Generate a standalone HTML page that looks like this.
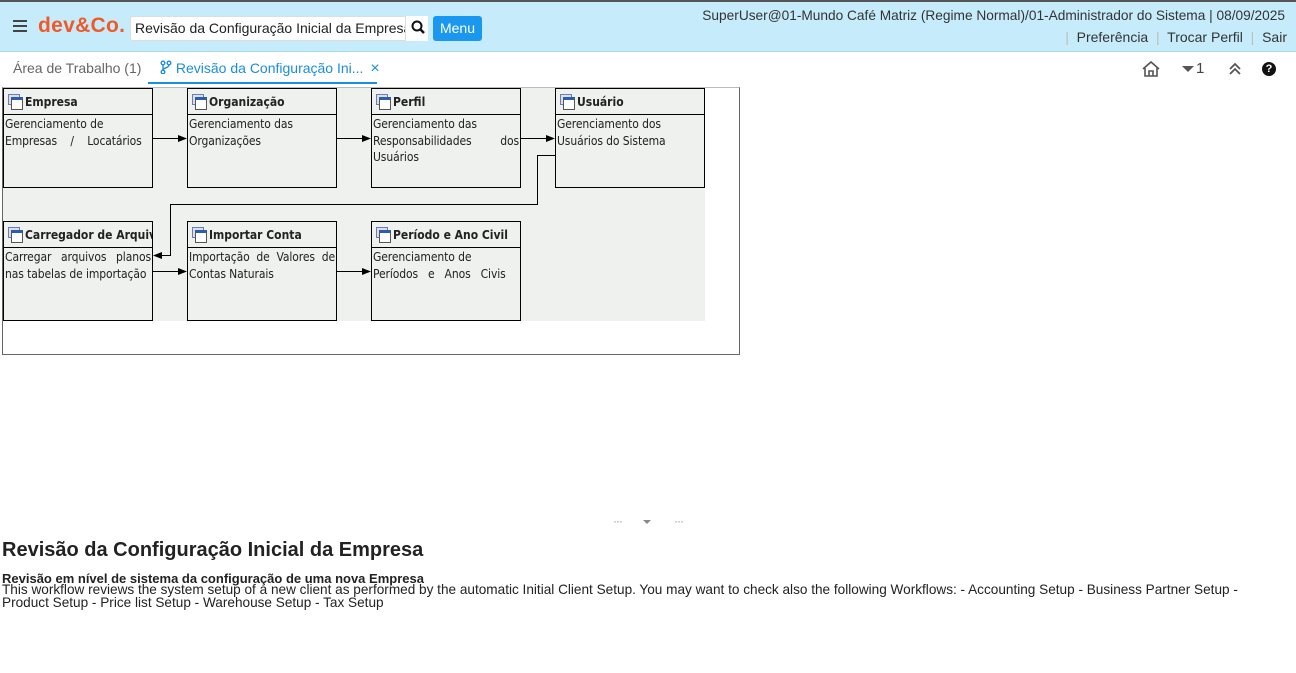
<!DOCTYPE html>
<html><head><meta charset="utf-8"><style>
*{box-sizing:border-box;margin:0;padding:0}
body{width:1296px;height:673px;background:#fff;font-family:"Liberation Sans","DejaVu Sans",sans-serif;position:relative;overflow:hidden;color:#222}
.hdr{position:absolute;left:0;top:0;width:1296px;height:52px;background:#c6ecfb;border-top:2px solid #555;border-bottom:1px solid #a8d8ea}
.abs{position:absolute}
.box{position:absolute;width:150px;height:100px;border:1px solid #000;background:#eef1ed;font-family:"DejaVu Sans Condensed","DejaVu Sans",sans-serif;font-stretch:condensed;font-size:12px}
.box .t{height:26px;border-bottom:1px solid #000;padding:1px 0 0 4px;font-weight:bold;white-space:nowrap;overflow:hidden;display:flex;align-items:center;gap:2px;font-size:12px}
.box .d{padding:1px 1px;line-height:16.5px;text-align:justify;letter-spacing:-0.1px}
.ic{display:inline-block;width:15px;height:14px;position:relative;margin-top:-2px;flex:none}
.ic:before{content:"";position:absolute;left:0;top:0;width:10px;height:9px;border:1px solid #6b7fa8;background:#dde}
.ic:after{content:"";position:absolute;left:3px;top:3px;width:10px;height:9px;border:1px solid #555;background:#fff;border-top:3px solid #2a5fb0}
</style></head><body>
<div class="hdr">
 <div class="abs" style="left:13px;top:18px;width:14px;height:2px;background:#444;box-shadow:0 5px 0 #444,0 10px 0 #444"></div>
 <div class="abs" style="left:38px;top:12px;font-size:21px;font-weight:bold;color:#f05a28;letter-spacing:0.3px">dev&amp;Co.</div>
 <div class="abs" style="left:130px;top:14px;width:298px;height:25px;background:#fff;border:1px solid #ddd;border-radius:3px;font-size:14px;padding:3px 0 0 4px;white-space:nowrap;overflow:hidden">Revisão da Configuração Inicial da Empresa</div>
 <div class="abs" style="left:405px;top:14px;width:23px;height:25px;border-left:1px solid #ddd;background:#fff">
  <svg width="23" height="25"><circle cx="11" cy="10" r="4.5" fill="none" stroke="#111" stroke-width="2"/><line x1="14" y1="13" x2="18" y2="17" stroke="#111" stroke-width="2.5"/></svg></div>
 <div class="abs" style="left:433px;top:14px;width:49px;height:25px;background:#1a98f0;border-radius:3px;color:#fff;font-size:14px;text-align:center;line-height:25px">Menu</div>
 <div class="abs" style="right:11px;top:6px;font-size:13.7px;color:#333;white-space:nowrap">SuperUser@01-Mundo Café Matriz (Regime Normal)/01-Administrador do Sistema | 08/09/2025</div>
 <div class="abs" style="right:9px;top:27px;font-size:14px;color:#333;white-space:nowrap"><span style="color:#bbb">|</span>&nbsp; Preferência &nbsp;<span style="color:#bbb">|</span>&nbsp; Trocar Perfil &nbsp;<span style="color:#bbb">|</span>&nbsp; Sair</div>
</div>
<div class="abs" style="left:13px;top:60px;font-size:14px;color:#666">Área de Trabalho (1)</div>
<div class="abs" style="left:160px;top:60px;font-size:14px;color:#1a8ee0;white-space:nowrap"><svg width="12" height="14" style="vertical-align:-1px"><circle cx="3" cy="3" r="1.8" fill="none" stroke="#1a8ee0" stroke-width="1.4"/><circle cx="9" cy="3" r="1.8" fill="none" stroke="#1a8ee0" stroke-width="1.4"/><circle cx="3" cy="12" r="1.8" fill="none" stroke="#1a8ee0" stroke-width="1.4"/><path d="M3 5V10M9 5C9 8 3 8 3 10" fill="none" stroke="#1a8ee0" stroke-width="1.4"/></svg> Revisão da Configuração Ini... <span style="margin-left:3px;font-size:16px">×</span></div>
<div class="abs" style="left:148px;top:82px;width:229px;height:2px;background:#1a8ee0"></div>
<svg class="abs" style="left:1141px;top:60px" width="20" height="18"><path d="M2 9L10 2L18 9M4 8V16H16V8M8 16V11H12V16" fill="none" stroke="#555" stroke-width="1.6"/></svg>
<svg class="abs" style="left:1182px;top:66px" width="12" height="8"><path d="M0 0H12L6 6Z" fill="#555"/></svg>
<div class="abs" style="left:1196px;top:60px;font-size:15px;color:#444">1</div>
<svg class="abs" style="left:1228px;top:62px" width="14" height="14"><path d="M2 7L7 2L12 7M2 12L7 7L12 12" fill="none" stroke="#555" stroke-width="1.8"/></svg>
<div class="abs" style="left:1262px;top:62px;width:14px;height:14px;border-radius:50%;background:#111;color:#fff;font-size:11px;font-weight:bold;text-align:center;line-height:14px">?</div>

<div class="abs" style="left:2px;top:87px;width:738px;height:268px;border:1px solid #666;border-top:1px solid #bbb"></div>
<div class="abs" style="left:3px;top:88px;width:702px;height:233px;background:#eef1ed"></div>
<svg class="abs" style="left:0;top:0" width="740" height="360">
 <g stroke="#000" stroke-width="1" fill="none">
  <path d="M153 138.5H180M337 138.5H364M521 138.5H548"/>
  <path d="M555 155.5H537.5V204.5H170.5V255.5H160"/>
  <path d="M153 271.5H180M337 271.5H364"/>
 </g>
 <g fill="#000">
  <path d="M187 138.5L178 135V142Z"/><path d="M371 138.5L362 135V142Z"/><path d="M555 138.5L546 135V142Z"/>
  <path d="M153 255.5L162 252V259Z"/><path d="M187 271.5L178 268V275Z"/><path d="M371 271.5L362 268V275Z"/>
 </g>
</svg>
<div class="box" style="left:3px;top:88px"><div class="t"><span class="ic"></span>Empresa</div><div class="d">Gerenciamento de<br>Empresas&nbsp;&nbsp;&nbsp;&nbsp;/&nbsp;&nbsp;&nbsp;&nbsp;Locatários</div></div>
<div class="box" style="left:187px;top:88px"><div class="t"><span class="ic"></span>Organização</div><div class="d">Gerenciamento das<br>Organizações</div></div>
<div class="box" style="left:371px;top:88px"><div class="t"><span class="ic"></span>Perfil</div><div class="d">Gerenciamento das<br>Responsabilidades dos Usuários</div></div>
<div class="box" style="left:555px;top:88px"><div class="t"><span class="ic"></span>Usuário</div><div class="d">Gerenciamento dos<br>Usuários do Sistema</div></div>
<div class="box" style="left:3px;top:221px"><div class="t"><span class="ic"></span>Carregador de Arquivo</div><div class="d">Carregar arquivos planos nas tabelas de importação</div></div>
<div class="box" style="left:187px;top:221px"><div class="t"><span class="ic"></span>Importar Conta</div><div class="d">Importação de Valores de Contas Naturais</div></div>
<div class="box" style="left:371px;top:221px"><div class="t"><span class="ic"></span>Período e Ano Civil</div><div class="d">Gerenciamento de<br>Períodos&nbsp;&nbsp;&nbsp;e&nbsp;&nbsp;&nbsp;Anos&nbsp;&nbsp;&nbsp;Civis</div></div>

<div class="abs" style="left:613px;top:514px;font-size:12px;color:#999;letter-spacing:-1px">···</div>
<svg class="abs" style="left:643px;top:520px" width="8" height="5"><path d="M0 0H8L4 4Z" fill="#888"/></svg>
<div class="abs" style="left:674px;top:514px;font-size:12px;color:#999;letter-spacing:-1px">···</div>

<div class="abs" style="left:2px;top:539px;font-size:20px;font-weight:bold;color:#222">Revisão da Configuração Inicial da Empresa</div>
<div class="abs" style="left:2px;top:571px;font-size:13px;font-weight:bold;color:#222">Revisão em nível de sistema da configuração de uma nova Empresa</div>
<div class="abs" style="left:2px;top:583px;width:1260px;font-size:13.6px;line-height:13px;color:#222">This workflow reviews the system setup of a new client as performed by the automatic Initial Client Setup. You may want to check also the following Workflows: - Accounting Setup - Business Partner Setup - Product Setup - Price list Setup - Warehouse Setup - Tax Setup</div>
</body></html>
